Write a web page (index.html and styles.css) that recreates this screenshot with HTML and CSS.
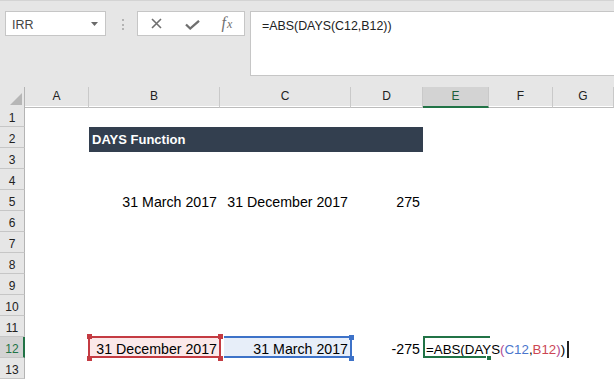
FILE: index.html
```html
<!DOCTYPE html>
<html>
<head>
<meta charset="utf-8">
<link rel="stylesheet" href="styles.css">
</head>
<body>
<div class="toolbar">
  <div class="namebox"><span class="nb-text">IRR</span><svg class="caret" width="7" height="4" viewBox="0 0 7 4"><polygon points="0,0 7,0 3.5,4" fill="#6a6a6a"/></svg></div>
  <div class="grip"><i></i><i></i><i></i></div>
  <div class="fnbtns">
    <svg class="ic-x" width="11" height="11" viewBox="0 0 11 11"><path d="M1 1 L10 10 M10 1 L1 10" stroke="#6f6f6f" stroke-width="1.6" fill="none"/></svg>
    <svg class="ic-ok" width="15" height="10" viewBox="0 0 15 10"><path d="M1 4.5 L5.2 8.5 L14 0.8" stroke="#6f6f6f" stroke-width="2.3" fill="none"/></svg>
    <span class="fx"><i>f</i><i class="fx-x">x</i></span>
  </div>
  <div class="fbar">=ABS(DAYS(C12,B12))</div>
</div>
<div class="sheet">
  <div class="row hdr">
    <div class="corner"><svg width="12" height="12" viewBox="0 0 12 12"><polygon points="12,0 12,12 0,12" fill="#b6b6b6"/></svg></div>
    <div>A</div><div>B</div><div>C</div><div>D</div><div class="sel">E</div><div>F</div><div>G</div>
  </div>
  <div class="row"><div class="rh">1</div></div>
  <div class="row"><div class="rh">2</div><div class="banner">DAYS Function</div></div>
  <div class="row"><div class="rh">3</div></div>
  <div class="row"><div class="rh">4</div></div>
  <div class="row"><div class="rh">5</div><div class="cell r cb">31 March 2017</div><div class="cell r cc">31 December 2017</div><div class="cell r cd">275</div></div>
  <div class="row"><div class="rh">6</div></div>
  <div class="row"><div class="rh">7</div></div>
  <div class="row"><div class="rh">8</div></div>
  <div class="row"><div class="rh">9</div></div>
  <div class="row"><div class="rh">10</div></div>
  <div class="row"><div class="rh">11</div></div>
  <div class="row">
    <div class="rh sel-rh">12</div>
    <div class="cell r cb ref-red">31 December 2017<span class="hd red tl"></span><span class="hd red tr"></span><span class="hd red bl"></span><span class="hd red br"></span></div>
    <div class="cell r cc ref-blue">31 March 2017<span class="hd blue tr"></span><span class="hd blue br"></span></div>
    <div class="cell r cd">-275</div>
    <div class="cell ce edit">=ABS(DAYS<span class="k-p">(</span><span class="k-b">C12</span>,<span class="k-r">B12</span><span class="k-p">)</span>)<span class="caret-bar"></span><span class="fillh"></span></div>
  </div>
  <div class="row"><div class="rh">13</div></div>
</div>
</body>
</html>
```
FILE: styles.css
```css
html, body {
  margin: 0;
  padding: 0;
}
body {
  width: 614px;
  height: 379px;
  overflow: hidden;
  background: #fff;
  font-family: "Liberation Sans", Arial, sans-serif;
  color: #000;
}

/* ---------- toolbar / formula bar ---------- */
.toolbar {
  height: 87px;
  box-sizing: border-box;
  background: #e6e6e6;
  border-top: 1px solid #d4d4d4;
  display: flex;
  align-items: flex-start;
  padding: 10px 0 0 5px;
}
.namebox {
  width: 101px;
  height: 25px;
  box-sizing: border-box;
  border: 1px solid #c6c6c6;
  background: #fff;
  display: flex;
  align-items: center;
  justify-content: space-between;
  padding: 0 7px 0 6px;
  font-size: 12.5px;
  color: #444;
}
.nb-text {
  margin-top: 2px;
}
.caret {
  display: block;
}
.grip {
  margin: 8px 0 0 16px;
  width: 2px;
  display: flex;
  flex-direction: column;
  gap: 2.5px;
}
.grip i {
  display: block;
  width: 2px;
  height: 2px;
  background: #b3b3b3;
}
.fnbtns {
  margin-left: 13px;
  width: 108px;
  height: 25px;
  box-sizing: border-box;
  border: 1px solid #c6c6c6;
  background: #fff;
  display: flex;
  align-items: center;
}
.ic-x {
  margin-left: 12.5px;
  display: block;
}
.ic-ok {
  margin-left: 23px;
  margin-top: 2px;
  display: block;
}
.fx {
  margin-left: 22px;
  font-family: "Liberation Serif", "Times New Roman", serif;
  color: #6f6f6f;
  font-size: 16px;
  line-height: 16px;
}
.fx i {
  font-style: italic;
}
.fx-x {
  font-size: 12px;
  margin-left: 1px;
}
.fbar {
  margin-left: 5px;
  flex: 1;
  height: 65px;
  box-sizing: border-box;
  border: 1px solid #c6c6c6;
  border-right: none;
  background: #fff;
  padding: 6px 0 0 11px;
  font-size: 12.4px;
  line-height: 16px;
  color: #222;
}

/* ---------- sheet grid ---------- */
.row {
  display: grid;
  grid-template-columns: 25px 64px 131px 131px 72px 66px 64px 61px;
  height: 21px;
}
.hdr {
  height: 19px;
  background: #e6e6e6;
}
.hdr > div {
  box-sizing: border-box;
  border-right: 1px solid #c9c9c9;
  border-bottom: 1px solid #bcbcbc;
  text-align: center;
  font-size: 12px;
  line-height: 19px;
  color: #222;
}
.hdr > .corner {
  display: flex;
  align-items: flex-end;
  justify-content: flex-end;
  padding: 0 2px 2px 0;
  border-right: 1px solid #b4b4b4;
}
.corner svg {
  display: block;
}
.hdr > .sel {
  background: #d3d3d3;
  border-bottom: 2px solid #217346;
  color: #1d5e3a;
}
.rh {
  grid-column: 1;
  box-sizing: border-box;
  background: #e6e6e6;
  border-right: 1px solid #b4b4b4;
  border-bottom: 1px solid #c6c6c6;
  text-align: center;
  font-size: 12px;
  line-height: 25px;
  height: 21px;
  color: #222;
}
.rh.sel-rh {
  background: #d3d3d3;
  border-right: 2px solid #217346;
  color: #217346;
  padding-left: 1px;
}

.banner {
  grid-column: 3 / 6;
  background: #333f4f;
  color: #fff;
  font-weight: bold;
  font-size: 13px;
  line-height: 25px;
  padding-left: 3px;
  white-space: nowrap;
}

.cell {
  font-size: 14.2px;
  line-height: 25px;
  height: 21px;
  white-space: nowrap;
  padding: 0 3px;
  box-sizing: border-box;
}
.r { text-align: right; }
.cb { grid-column: 3; }
.cc { grid-column: 4; }
.cd { grid-column: 5; }
.ce { grid-column: 6; }

/* reference highlights */
.ref-red {
  position: relative;
  z-index: 2;
  background: #fbe8e9;
}
.ref-red::before {
  content: "";
  position: absolute;
  top: -1px;
  left: -1px;
  right: -1px;
  bottom: 0;
  border: 2px solid #c43b42;
  pointer-events: none;
}
.ref-blue {
  position: relative;
  z-index: 1;
}
.ref-blue::before {
  content: "";
  position: absolute;
  top: -1px;
  left: 4px;
  right: -1px;
  bottom: 0;
  border: 2px solid #3d72c8;
  border-left: none;
  background: #e7eef9;
  z-index: -1;
}
.hd {
  position: absolute;
  width: 5px;
  height: 5px;
  z-index: 3;
}
.hd.red { background: #c43b42; }
.hd.blue { background: #3d72c8; }
.ref-red .tl { left: -2px; top: -3px; }
.ref-red .bl { left: -2px; bottom: -3px; }
.ref-red .tr { right: -3px; top: -3px; }
.ref-red .br { right: -3px; bottom: -3px; }
.ref-blue .tr { right: -3px; top: -2px; }
.ref-blue .br { right: -3px; bottom: -3px; }

/* editing cell */
.edit {
  position: relative;
  z-index: 1;
  font-size: 13.3px;
}
.edit::before {
  content: "";
  position: absolute;
  top: -1px;
  left: 0;
  right: -1px;
  height: 21px;
  border-top: 2px solid #217346;
  border-left: 2px solid #217346;
  box-sizing: border-box;
}
.edit::after {
  content: "";
  position: absolute;
  left: 0;
  width: 63px;
  bottom: 0;
  height: 2px;
  background: #217346;
}
.fillh {
  position: absolute;
  left: 63px;
  top: 19px;
  width: 4px;
  height: 4px;
  background: #217346;
  border-left: 1px solid #fff;
}
.k-p { color: #b24a91; }
.k-b { color: #4a76cc; }
.k-r { color: #cc4552; }
.caret-bar {
  display: inline-block;
  width: 2px;
  height: 17px;
  background: #222;
  margin-left: 2px;
  vertical-align: -4px;
}
```
